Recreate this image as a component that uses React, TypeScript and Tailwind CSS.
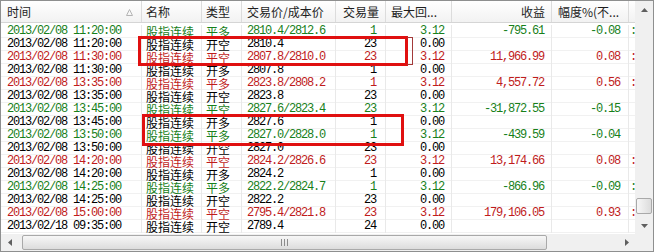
import type { ReactNode } from 'react';

type Tone = 'g' | 'r' | 'k';

interface Trade {
  time: string;
  kind: string;
  price: string;
  qty: string;
  drawdown: string;
  profit?: string;
  pct?: string;
  tone: Tone;
  edge?: boolean;
}

const trades: Trade[] = [
  { time: '2013/02/08 11:20:00', kind: '平多', price: '2810.4/2812.6', qty: '1', drawdown: '3.12', profit: '-795.61', pct: '-0.08', tone: 'g', edge: true },
  { time: '2013/02/08 11:20:00', kind: '开空', price: '2810.4', qty: '23', drawdown: '0.00', tone: 'k' },
  { time: '2013/02/08 11:30:00', kind: '平空', price: '2807.8/2810.0', qty: '23', drawdown: '3.12', profit: '11,966.99', pct: '0.08', tone: 'r', edge: true },
  { time: '2013/02/08 11:30:00', kind: '开多', price: '2807.8', qty: '1', drawdown: '0.00', tone: 'k' },
  { time: '2013/02/08 13:35:00', kind: '平多', price: '2823.8/2808.2', qty: '1', drawdown: '3.12', profit: '4,557.72', pct: '0.56', tone: 'r', edge: true },
  { time: '2013/02/08 13:35:00', kind: '开空', price: '2823.8', qty: '23', drawdown: '0.00', tone: 'k' },
  { time: '2013/02/08 13:45:00', kind: '平空', price: '2827.6/2823.4', qty: '23', drawdown: '3.12', profit: '-31,872.55', pct: '-0.15', tone: 'g' },
  { time: '2013/02/08 13:45:00', kind: '开多', price: '2827.6', qty: '1', drawdown: '0.00', tone: 'k' },
  { time: '2013/02/08 13:50:00', kind: '平多', price: '2827.0/2828.0', qty: '1', drawdown: '3.12', profit: '-439.59', pct: '-0.04', tone: 'g' },
  { time: '2013/02/08 13:50:00', kind: '开空', price: '2827.0', qty: '23', drawdown: '0.00', tone: 'k' },
  { time: '2013/02/08 14:20:00', kind: '平空', price: '2824.2/2826.6', qty: '23', drawdown: '3.12', profit: '13,174.66', pct: '0.08', tone: 'r', edge: true },
  { time: '2013/02/08 14:20:00', kind: '开多', price: '2824.2', qty: '1', drawdown: '0.00', tone: 'k' },
  { time: '2013/02/08 14:25:00', kind: '平多', price: '2822.2/2824.7', qty: '1', drawdown: '3.12', profit: '-866.96', pct: '-0.09', tone: 'g', edge: true },
  { time: '2013/02/08 14:25:00', kind: '开空', price: '2822.2', qty: '23', drawdown: '0.00', tone: 'k' },
  { time: '2013/02/08 15:00:00', kind: '平空', price: '2795.4/2821.8', qty: '23', drawdown: '3.12', profit: '179,106.05', pct: '0.93', tone: 'r', edge: true },
  { time: '2013/02/18 09:35:00', kind: '开空', price: '2789.4', qty: '24', drawdown: '0.00', tone: 'k' },
];

const toneText: Record<Tone, string> = {
  g: 'text-[#17801a]',
  r: 'text-[#c01c1c]',
  k: 'text-black',
};

const mono = "font-['Liberation_Mono',monospace] text-[12px] tracking-[-1.2px]";
const cjk = "font-['Noto_Sans_CJK_SC',sans-serif] text-[12px]";

function HeadCell({ className, children }: { className: string; children?: ReactNode }) {
  return (
    <div className={`flex h-full shrink-0 items-center overflow-hidden whitespace-nowrap border-r border-[#dcdcdc] ${className}`}>
      {children}
    </div>
  );
}

function Cell({ className, children }: { className: string; children?: ReactNode }) {
  return (
    <div className={`flex h-[13px] shrink-0 items-center whitespace-nowrap border-r border-[#e9e9e9] leading-[13px] ${className}`}>
      {children}
    </div>
  );
}

function Arrow({ dir }: { dir: 'up' | 'down' | 'left' | 'right' }) {
  const points = {
    up: '0,4 3.5,0 7,4',
    down: '0,0 3.5,4 7,0',
    left: '4,0 0,3.5 4,7',
    right: '0,0 4,3.5 0,7',
  }[dir];
  const vertical = dir === 'up' || dir === 'down';
  return (
    <svg width={vertical ? 7 : 4} height={vertical ? 4 : 7} viewBox={vertical ? '0 0 7 4' : '0 0 4 7'}>
      <polygon points={points} fill="#5f5f5f" />
    </svg>
  );
}

function Header() {
  return (
    <div className={`flex h-[22px] shrink-0 border-b border-[#d5d5d5] bg-linear-to-b from-white to-[#f2f2f2] text-[#1e1e1e] ${cjk}`}>
      <HeadCell className="w-[141px] justify-between pl-[6px] pr-[8px]">
        <span>时间</span>
        <svg width="7" height="7" viewBox="0 0 7 7" className="mt-[1px]">
          <polygon points="0.5,6.5 3.5,0.5 6.5,6.5" fill="none" stroke="#b4b4b4" strokeWidth="1" />
        </svg>
      </HeadCell>
      <HeadCell className="w-[60px] pl-[4px]">名称</HeadCell>
      <HeadCell className="w-[40px] pl-[4px]">类型</HeadCell>
      <HeadCell className="w-[94px] pl-[5px]">交易价/成本价</HeadCell>
      <HeadCell className="w-[50px] pl-[7px]">交易量</HeadCell>
      <HeadCell className="w-[66px] pl-[5px]">最大回...</HeadCell>
      <HeadCell className="w-[100px] justify-end pr-[6px]">收益</HeadCell>
      <HeadCell className="w-[77px] pl-[6px]">幅度%(不...</HeadCell>
      <div className="flex-1" />
    </div>
  );
}

function Row({ t }: { t: Trade }) {
  return (
    <div className={`flex h-[13px] shadow-[inset_0_-1px_0_#f1f1f1] ${toneText[t.tone]}`}>
      <Cell className={`w-[141px] pl-[6px] ${mono}`}>{t.time}</Cell>
      <Cell className={`w-[60px] pl-[4px] ${cjk}`}>股指连续</Cell>
      <Cell className={`w-[40px] pl-[4px] ${cjk}`}>{t.kind}</Cell>
      <Cell className={`w-[94px] pl-[5px] ${mono}`}>{t.price}</Cell>
      <Cell className={`w-[50px] justify-end pr-[9px] ${mono}`}>{t.qty}</Cell>
      <Cell className={`w-[66px] justify-end pr-[7px] ${mono}`}>{t.drawdown}</Cell>
      <Cell className={`w-[100px] justify-end pr-[7px] ${mono}`}>{t.profit}</Cell>
      <Cell className={`w-[77px] justify-end pr-[8px] ${mono}`}>{t.pct}</Cell>
      <div className={`flex-1 overflow-hidden pl-[1px] leading-[13px] ${mono}`}>{t.edge ? ':' : ''}</div>
    </div>
  );
}

function HScroll() {
  return (
    <div className="flex h-[17px] shrink-0 items-stretch bg-[#f0f0f0]">
      <div className="flex w-[17px] items-center justify-center">
        <Arrow dir="left" />
      </div>
      <div className="flex flex-1 items-stretch py-[1px]">
        <div className="ml-[4px] flex w-[525px] items-center justify-center rounded-[2px] border border-[#a9a9a9] bg-linear-to-b from-[#f7f7f7] to-[#dcdcdc]">
          <div className="flex gap-[2px]">
            <span className="h-[7px] w-px bg-[#8c8c8c]" />
            <span className="h-[7px] w-px bg-[#8c8c8c]" />
            <span className="h-[7px] w-px bg-[#8c8c8c]" />
          </div>
        </div>
      </div>
      <div className="flex w-[17px] items-center justify-center">
        <Arrow dir="right" />
      </div>
    </div>
  );
}

function VScroll() {
  return (
    <div className="flex w-[18px] shrink-0 flex-col bg-[#f0f0f0]">
      <div className="flex h-[17px] items-center justify-center">
        <Arrow dir="up" />
      </div>
      <div className="flex flex-1 flex-col px-[1px]">
        <div className="mb-[3px] mt-auto h-[16px] rounded-[2px] border border-[#a9a9a9] bg-linear-to-r from-[#f7f7f7] to-[#dcdcdc]" />
      </div>
      <div className="flex h-[17px] items-center justify-center">
        <Arrow dir="down" />
      </div>
      <div className="h-[17px] bg-[#f0f0f0]" />
    </div>
  );
}

export default function App() {
  return (
    <div className="relative flex h-[252px] w-[654px] overflow-hidden border border-[#8e8f8f] bg-white">
      <div className="flex min-w-0 flex-1 flex-col">
        <Header />
        <div className="flex-1 overflow-hidden pt-[2px]">
          {trades.map((t, i) => (
            <Row key={i} t={t} />
          ))}
        </div>
        <HScroll />
      </div>
      <VScroll />

      {/* highlight boxes drawn over the grid */}
      <div className="pointer-events-none absolute left-[137px] top-[35px] h-[30px] w-[270px] border-[3px] border-[#e01010]" />
      <div className="pointer-events-none absolute left-[406px] top-[36px] h-[28px] w-[6px] border border-l-0 border-[#a33a3a]" />
      <div className="pointer-events-none absolute left-[141px] top-[113px] h-[32px] w-[262px] border-[3px] border-[#e01010]" />
    </div>
  );
}
